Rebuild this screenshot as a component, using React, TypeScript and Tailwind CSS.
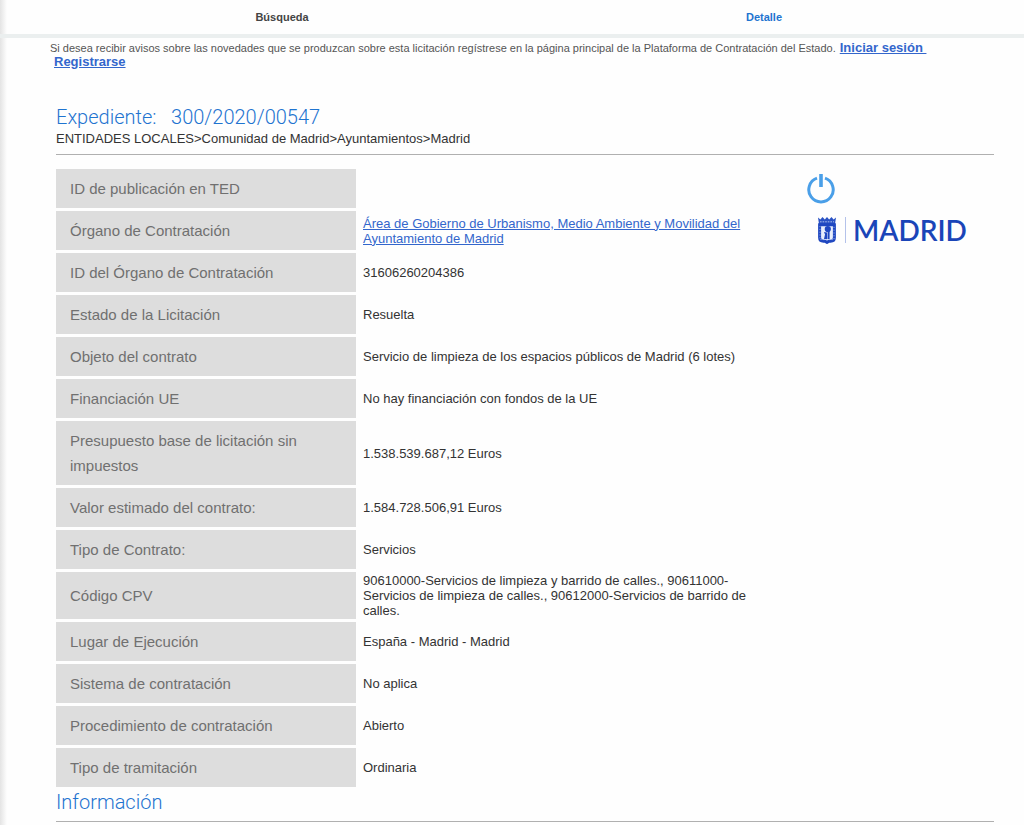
import type { ReactNode } from 'react'

interface DetailRow {
  label: string
  value?: string
  href?: string
}

const rows: DetailRow[] = [
  { label: 'ID de publicación en TED' },
  {
    label: 'Órgano de Contratación',
    value:
      'Área de Gobierno de Urbanismo, Medio Ambiente y Movilidad del Ayuntamiento de Madrid',
    href: '#organo',
  },
  { label: 'ID del Órgano de Contratación', value: '31606260204386' },
  { label: 'Estado de la Licitación', value: 'Resuelta' },
  {
    label: 'Objeto del contrato',
    value: 'Servicio de limpieza de los espacios públicos de Madrid (6 lotes)',
  },
  { label: 'Financiación UE', value: 'No hay financiación con fondos de la UE' },
  {
    label: 'Presupuesto base de licitación sin impuestos',
    value: '1.538.539.687,12 Euros',
  },
  { label: 'Valor estimado del contrato:', value: '1.584.728.506,91 Euros' },
  { label: 'Tipo de Contrato:', value: 'Servicios' },
  {
    label: 'Código CPV',
    value:
      '90610000-Servicios de limpieza y barrido de calles., 90611000-Servicios de limpieza de calles., 90612000-Servicios de barrido de calles.',
  },
  { label: 'Lugar de Ejecución', value: 'España - Madrid - Madrid' },
  { label: 'Sistema de contratación', value: 'No aplica' },
  { label: 'Procedimiento de contratación', value: 'Abierto' },
  { label: 'Tipo de tramitación', value: 'Ordinaria' },
]

const SectionTitle = ({ children }: { children: ReactNode }) => (
  <h2 className="font-[Roboto,sans-serif] text-[20px] leading-[24px] font-light whitespace-pre text-[#1f74d0]">
    {children}
  </h2>
)

const PowerIcon = () => (
  <svg width="30" height="32" viewBox="0 0 30 32" fill="none" aria-hidden="true">
    <path
      d="M11 5.2A12.2 12.2 0 1 0 19 5.2"
      stroke="#4a9fe8"
      strokeWidth="3"
    />
    <path d="M15 1V14" stroke="#4a9fe8" strokeWidth="3.6" />
  </svg>
)

const MadridShield = () => (
  <svg width="20" height="28" viewBox="0 0 20 28" aria-hidden="true">
    <path
      d="M1 1.5L3.4 3.6L5.5 1L7.8 3.6L10 1L12.2 3.6L14.5 1L16.6 3.6L19 1.5L18 8H2Z"
      fill="#2a52c4"
    />
    <path d="M3 5.8H17" stroke="#c9d5f5" strokeWidth="0.8" strokeDasharray="1.6 1" />
    <path
      d="M2.6 8.8H17.4V21.5Q17.4 25.2 13.6 25.2H12L10 26.4L8 25.2H6.4Q2.6 25.2 2.6 21.5Z"
      fill="#e8eefc"
      stroke="#1f47c0"
      strokeWidth="3"
    />
    <path
      d="M3 10V23.6H17V10"
      fill="none"
      stroke="#a9bcef"
      strokeWidth="0.8"
      strokeDasharray="1.2 1.6"
    />
    <circle cx="10.8" cy="13" r="3.1" fill="#1f47c0" />
    <path d="M11.6 14V23" stroke="#1f47c0" strokeWidth="2" />
    <path d="M7 23L8 18.4L7 16L10 16.6L10.2 23Z" fill="#1f47c0" />
  </svg>
)

const App = () => {
  return (
    <div className="min-h-screen bg-[linear-gradient(to_right,#e4e4e4,#fefefe_7px)] font-['Liberation_Sans',Arial,sans-serif] text-[#333333]">
      <nav className="grid grid-cols-2 border-b-4 border-[#ebefef] pr-[19px] pl-[41px] text-center text-[11px] leading-[34px] font-bold">
        <a href="#busqueda" className="text-[#444444]">
          Búsqueda
        </a>
        <a href="#detalle" className="text-[#1f74d0]">
          Detalle
        </a>
      </nav>

      <p className="pt-[3px] pl-[50px] text-[11px] leading-[14px] text-[#555555]">
        Si desea recibir avisos sobre las novedades que se produzcan sobre esta
        licitación regístrese en la página principal de la Plataforma de
        Contratación del Estado.
        <a
          href="#login"
          className="ml-1 text-[13px] font-bold whitespace-pre text-[#3366cc] underline"
        >
          {'Iniciar sesión '}
        </a>
        <br />
        <a
          href="#registro"
          className="ml-1 text-[13px] font-bold text-[#3366cc] underline"
        >
          Registrarse
        </a>
      </p>

      <main className="pt-9 pr-[30px] pl-14">
        <SectionTitle>{'Expediente:   300/2020/00547'}</SectionTitle>
        <p className="border-b border-[#b0b0b0] pt-[2px] pb-[7px] text-[13px] leading-[16px]">
          ENTIDADES LOCALES&gt;Comunidad de Madrid&gt;Ayuntamientos&gt;Madrid
        </p>

        <div className="mt-[11px] flex items-start">
          <table className="w-[707px] table-fixed border-separate border-spacing-x-0 border-spacing-y-[3px]">
            <tbody>
              {rows.map(({ label, value, href }) => (
                <tr key={label}>
                  <th
                    scope="row"
                    className="h-[39px] w-[300px] bg-[#dddddd] px-[14px] py-[7px] text-left align-middle text-[15px] leading-[25px] font-normal text-[#707070]"
                  >
                    {label}
                  </th>
                  <td className="px-[7px] py-px align-middle text-[13px] leading-[15px]">
                    {href ? (
                      <a href={href} className="text-[#3366cc] underline">
                        {value}
                      </a>
                    ) : (
                      value
                    )}
                  </td>
                </tr>
              ))}
            </tbody>
          </table>

          <aside className="ml-[43px] pt-[7px]">
            <button type="button" aria-label="Salir" className="block">
              <PowerIcon />
            </button>
            <div className="mt-[11px] ml-[11px] flex items-center text-[#1a45b8]">
              <MadridShield />
              <span className="ml-2 h-[26px] w-px bg-[#b4c2ea]" />
              <span className="ml-[7px] font-[Lato,sans-serif] text-[28px] leading-[28px] font-semibold">
                MADRID
              </span>
            </div>
          </aside>
        </div>

        <div className="border-b border-[#b0b0b0] pb-[7px]">
          <SectionTitle>Información</SectionTitle>
        </div>
      </main>
    </div>
  )
}

export default App
